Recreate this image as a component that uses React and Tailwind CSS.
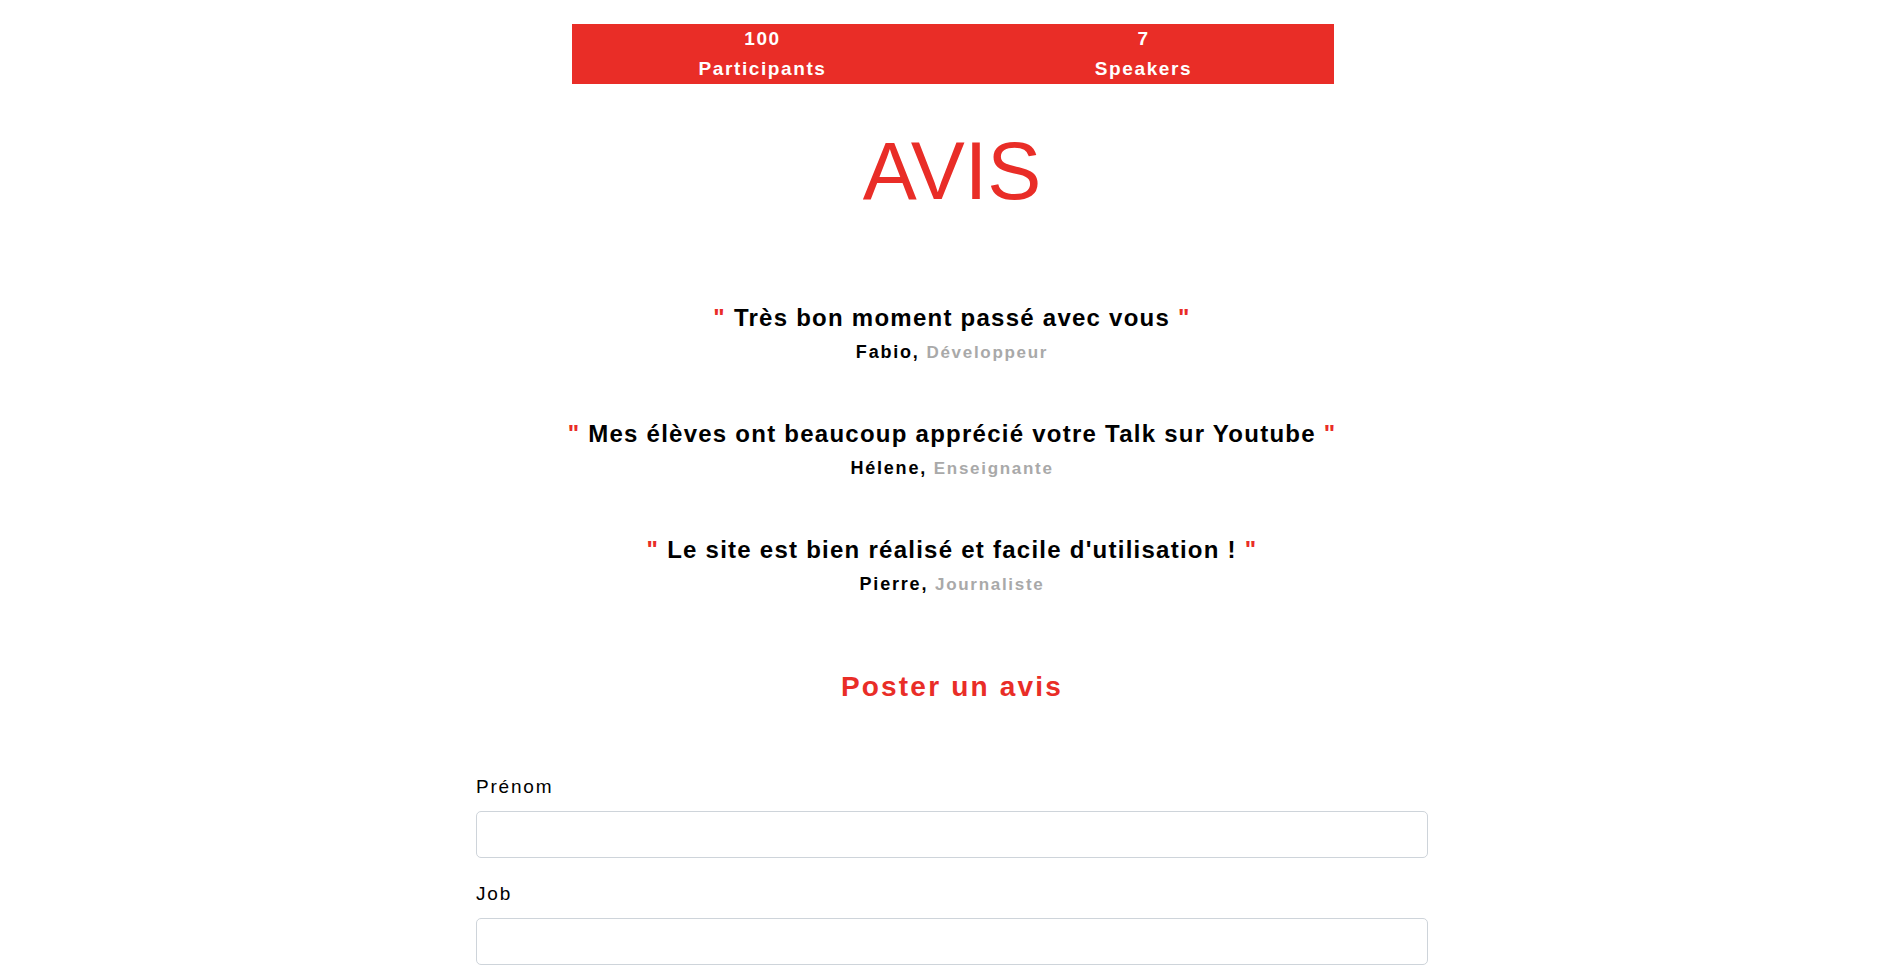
import { useState } from 'react'

const reviews = [
  { text: 'Très bon moment passé avec vous', name: 'Fabio', job: 'Développeur' },
  { text: 'Mes élèves ont beaucoup apprécié votre Talk sur Youtube', name: 'Hélene', job: 'Enseignante' },
  { text: "Le site est bien réalisé et facile d'utilisation !", name: 'Pierre', job: 'Journaliste' },
]

const Stat = ({ value, label }) => (
  <div className="flex-1 flex flex-col items-center text-white font-bold text-[19px] leading-[30px] tracking-[1.6px]">
    <span>{value}</span>
    <span>{label}</span>
  </div>
)

const Review = ({ text, name, job }) => (
  <div className="flex flex-col items-center">
    <p className="text-[24px] leading-[30px] font-bold tracking-[1.25px] text-black">
      <span className="text-[#e92d27]">"</span> {text} <span className="text-[#e92d27]">"</span>
    </p>
    <p className="mt-[6px] text-[18px] leading-[27px] font-bold tracking-[1.8px] text-black">
      {name}, <span className="text-[17px] tracking-[1.7px] text-[#a9a9a9]">{job}</span>
    </p>
  </div>
)

const App = () => {
  const [firstName, setFirstName] = useState('')
  const [job, setJob] = useState('')

  return (
    <div className="min-h-screen bg-white font-['Liberation_Sans',Arial,sans-serif] pb-20">
      <div className="flex justify-center pl-[2px] pt-6">
        <div className="w-[762px] flex bg-[#e92d27]">
          <Stat value="100" label="Participants" />
          <Stat value="7" label="Speakers" />
        </div>
      </div>

      <h1 className="mt-[47px] text-center text-[81px] leading-[80px] font-normal text-[#e92d27]">AVIS</h1>

      <div className="mt-[92px] flex flex-col items-center gap-[53px]">
        {reviews.map((r) => (
          <Review key={r.name} {...r} />
        ))}
      </div>

      <h2 className="mt-[72px] text-center text-[28px] leading-[34px] font-bold tracking-[2.2px] text-[#e92d27]">
        Poster un avis
      </h2>

      <form className="w-1/2 mx-auto mt-[69px]" onSubmit={(e) => e.preventDefault()}>
        <label className="block text-[19px] leading-[27px] tracking-[1.8px] text-black mb-[11px]">Prénom</label>
        <input
          className="block w-full h-[47px] px-3 border border-[#ced4da] rounded-[5px] outline-none text-[18px]"
          value={firstName}
          onChange={(e) => setFirstName(e.target.value)}
          type="text"
        />
        <label className="block mt-[22px] text-[19px] leading-[27px] tracking-[1.8px] text-black mb-[11px]">Job</label>
        <input
          className="block w-full h-[47px] px-3 border border-[#ced4da] rounded-[5px] outline-none text-[18px]"
          value={job}
          onChange={(e) => setJob(e.target.value)}
          type="text"
        />
      </form>
    </div>
  )
}

export default App
